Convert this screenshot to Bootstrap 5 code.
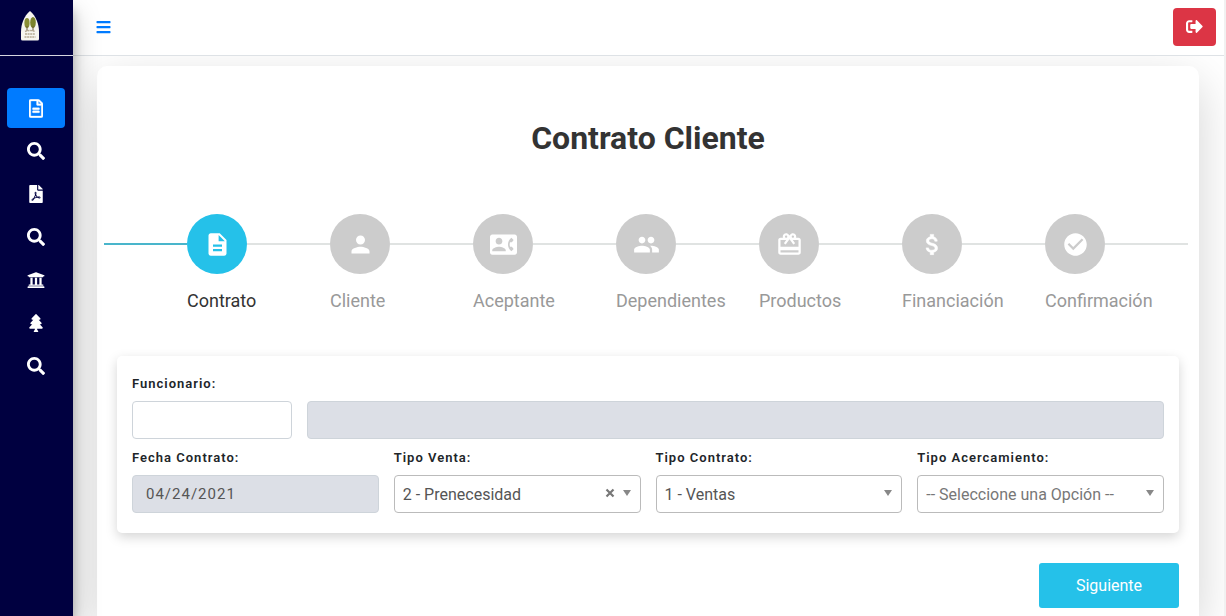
<!DOCTYPE html>
<html lang="es">
<head>
<meta charset="utf-8">
<meta name="viewport" content="width=device-width, initial-scale=1">
<title>Contrato Cliente</title>
<link href="https://cdn.jsdelivr.net/npm/bootstrap@5.3.0/dist/css/bootstrap.min.css" rel="stylesheet">
<style>
  body { font-family: Roboto, "Liberation Sans", sans-serif; background: #fff; color: #212529; }
  svg { fill: currentColor; display: block; }
  .app { border-right: 2px solid #f1f1f1; }
  .sidebar { width: 73px; background: #000040; z-index: 3; box-shadow: 0 14px 28px rgba(0,0,0,.25), 0 10px 10px rgba(0,0,0,.22); }
  .brand-link { height: 56px; border-bottom: 1px solid #d5d5e0; padding: 11px 0 0 20px; }
  .side-nav { padding: 32px 8px 0 7px; gap: 3px; }
  .side-nav .nav-link { height: 40px; border-radius: 4px; color: #fff; padding: 0; }
  .side-nav .nav-link.active { background: #007bff; }
  .topbar { height: 56px; background: #fff; border-bottom: 1px solid #dee2e6; padding: 0 8px 2px 23px; z-index: 2; }
  .btn-menu { color: #007bff; padding: 0; border: 0; }
  .btn-exit { background: #dc3545; color: #fff; width: 43px; height: 38px; border-radius: 4px; }
  .content-area { padding: 10px 25px 0 24px; overflow: hidden; }
  .wizard { border-radius: 10px 10px 0 0; background: #fff; box-shadow: 0 16px 48px rgba(0,0,0,.175); padding: 52px 20px 8px; }
  .wizard h1 { font-size: 32px; line-height: 40px; font-weight: 700; color: #333; margin-bottom: 56px; }
  .steps { margin: 0 -9px 42px -13px; }
  .steps::before { content: ""; flex: 0 0 83px; height: 2px; margin-top: 29px; background: #49b5cb; }
  .step { flex: 1 1 0; min-width: 0; color: #999; font-size: 18px; line-height: 26px; }
  .step-head::after { content: ""; flex: 1; height: 2px; background: #e0e3e2; }
  .step-dot { width: 60px; height: 60px; background: #ccc; color: #fff; }
  .step.current { color: #333; }
  .step.current .step-dot { background: #25c1e9; }
  .step-name { display: block; margin-top: 14px; white-space: nowrap; }
  .form-panel { border-radius: 5px; background: #fff; box-shadow: 0 4px 12px rgba(0,0,0,.17); padding: 19px 15px 20px; margin-bottom: 30px; }
  .form-panel .row { --bs-gutter-x: 15px; }
  .form-panel .row + .row { margin-top: 10px; }
  .form-panel label { display: block; font-size: 13px; line-height: 18px; font-weight: 600; letter-spacing: 1px; margin-bottom: 8px; white-space: nowrap; }
  .field { display: block; width: 100%; height: 38px; border: 1px solid #ced4da; border-radius: 4px; background: #fff; color: #555; font-size: 16px; padding: 0 13px; letter-spacing: 1px; }
  .field:disabled { background: #dcdfe6; font-size: 15px; opacity: 1; }
  select.field { appearance: none; letter-spacing: 0; padding: 1px 40px 0 8px; border-color: #bbb; color: #555;
    background: url("data:image/svg+xml,%3Csvg xmlns='http://www.w3.org/2000/svg' viewBox='0 0 8 6'%3E%3Cpath d='M0 0h8L4 6z' fill='%23888'/%3E%3C/svg%3E") no-repeat right 9px top 14px / 8px 6px #fff; }
  select.field.empty { color: #777; }
  .clear-x { right: 25px; top: 12px; width: 12px; height: 12px; color: #777; border: 0; background: none; padding: 1px; }
  .btn-next { background: #25c1e9; color: #fff; width: 140px; height: 45px; border-radius: 3px; font-size: 16px; }
</style>
</head>
<body>
<svg width="0" height="0" class="position-absolute" aria-hidden="true">
  <symbol id="i-search" viewBox="0 0 512 512"><path d="M505 442.7L405.3 343c-4.5-4.5-10.6-7-17-7H372c27.6-35.3 44-79.7 44-128C416 93.1 322.9 0 208 0S0 93.1 0 208s93.1 208 208 208c48.3 0 92.7-16.4 128-44v16.3c0 6.4 2.5 12.5 7 17l99.7 99.7c9.4 9.4 24.6 9.4 33.9 0l28.3-28.3c9.4-9.4 9.4-24.6.1-34zM208 336c-70.7 0-128-57.2-128-128 0-70.7 57.2-128 128-128 70.7 0 128 57.2 128 128 0 70.7-57.2 128-128 128z"/></symbol>
</svg>
<div class="app d-flex min-vh-100">
  <aside class="sidebar flex-shrink-0 position-relative">
    <a href="#" class="brand-link d-block" aria-label="Inicio">
      <svg width="20" height="30" viewBox="0 0 20 30">
        <path d="M10 0C4 5 1 13 1 21v7q0 1.500 1.500 1.500h15Q19 29.500 19 28v-7C19 13 16 5 10 0z" fill="#f6f5ef"/>
        <ellipse cx="7" cy="12" rx="2.600" ry="5" fill="#8a8f36"/><ellipse cx="13" cy="11.500" rx="2.800" ry="5.500" fill="#7b842c"/>
        <path d="M7 15v5M13 15v5" stroke="#6b5a36" stroke-width="1"/>
        <path d="M5 20.500q5-2 10 0M5 23h10M4.500 26h11" stroke="#b5aa94" stroke-width="1.400" stroke-dasharray="2 .6" fill="none"/>
      </svg>
    </a>
    <nav class="side-nav nav flex-column" aria-label="Principal">
      <a href="#" class="nav-link active d-flex align-items-center justify-content-center" aria-label="Contratos"><svg width="14" height="19" viewBox="0 0 384 512" stroke="currentColor" stroke-width="10"><path d="M288 248v28c0 6.600-5.400 12-12 12H108c-6.600 0-12-5.400-12-12v-28c0-6.600 5.400-12 12-12h168c6.600 0 12 5.400 12 12zm-12 72H108c-6.600 0-12 5.400-12 12v28c0 6.600 5.400 12 12 12h168c6.600 0 12-5.400 12-12v-28c0-6.600-5.400-12-12-12zm108-188.100V464c0 26.500-21.500 48-48 48H48c-26.500 0-48-21.500-48-48V48C0 21.500 21.500 0 48 0h204.100C264.800 0 277 5.100 286 14.100L369.900 98c9 8.900 14.100 21.200 14.100 33.900zm-128-80V128h76.100L256 51.900zM336 464V176H232c-13.300 0-24-10.700-24-24V48H48v416h288z"/></svg></a>
      <a href="#" class="nav-link d-flex align-items-center justify-content-center" aria-label="Buscar contrato"><svg width="18" height="18"><use href="#i-search"/></svg></a>
      <a href="#" class="nav-link d-flex align-items-center justify-content-center" aria-label="Reportes PDF"><svg width="14" height="18" viewBox="0 0 384 512"><path d="M181.900 256.100c-5-16-4.900-46.900-2-46.900 8.400 0 7.600 36.900 2 46.900zm-1.700 47.200c-7.700 20.200-17.300 43.300-28.400 62.700 18.300-7 39-17.200 62.900-21.900-12.700-9.600-24.900-23.400-34.500-40.800zM86.100 428.100c0 .8 13.200-5.400 34.900-40.200-6.700 6.300-29.100 24.500-34.900 40.200zM248 160h136v328c0 13.300-10.700 24-24 24H24c-13.300 0-24-10.700-24-24V24C0 10.700 10.700 0 24 0h200v136c0 13.200 10.800 24 24 24zm-8 171.800c-20-12.200-33.300-29-42.700-53.800 4.500-18.500 11.600-46.600 6.200-64.200-4.700-29.400-42.400-26.500-47.800-6.800-5 18.300-.4 44.100 8.100 77-11.600 27.600-28.700 64.600-40.800 85.800-.1 0-.1.1-.2.1-27.100 13.900-73.600 44.500-54.500 68 5.600 6.900 16 10 21.500 10 17.900 0 35.700-18 61.100-61.800 25.800-8.500 54.100-19.100 79-23.200 21.700 11.800 47.100 19.500 64 19.500 29.200 0 31.200-32 19.700-43.400-13.900-13.600-54.300-9.700-73.600-7.200zM377 105L279 7c-4.500-4.500-10.600-7-17-7h-6v128h128v-6.100c0-6.300-2.500-12.400-7-16.900zm-74.100 255.300c4.100-2.700-2.500-11.900-42.800-9 37.100 15.800 42.800 9 42.800 9z"/></svg></a>
      <a href="#" class="nav-link d-flex align-items-center justify-content-center" aria-label="Buscar cliente"><svg width="18" height="18"><use href="#i-search"/></svg></a>
      <a href="#" class="nav-link d-flex align-items-center justify-content-center" aria-label="Bancos"><svg width="18" height="18" viewBox="0 0 512 512"><path d="M496 128v16a8 8 0 0 1-8 8h-24v12c0 6.627-5.373 12-12 12H60c-6.627 0-12-5.373-12-12v-12H24a8 8 0 0 1-8-8v-16a8 8 0 0 1 4.941-7.392l232-88a7.996 7.996 0 0 1 6.118 0l232 88A8 8 0 0 1 496 128zm-24 304H40c-13.255 0-24 10.745-24 24v16a8 8 0 0 0 8 8h464a8 8 0 0 0 8-8v-16c0-13.255-10.745-24-24-24zM96 192v192H60c-6.627 0-12 5.373-12 12v20h416v-20c0-6.627-5.373-12-12-12h-36V192h-64v192h-64V192h-64v192h-64V192H96z"/></svg></a>
      <a href="#" class="nav-link d-flex align-items-center justify-content-center" aria-label="Parques"><svg width="14" height="18" viewBox="0 0 384 512"><path d="M378.310 378.490L298.420 288h30.630c9.010 0 16.980-5 20.780-13.060 3.800-8.040 2.550-17.260-3.280-24.050L268.420 160h28.890c9.100 0 17.300-5.350 20.860-13.610 3.520-8.130 1.860-17.590-4.240-24.080L203.660 4.830c-6.030-6.450-17.280-6.450-23.320 0L70.060 122.310c-6.100 6.490-7.750 15.950-4.240 24.080C69.380 154.650 77.590 160 86.690 160h28.890l-78.140 90.910c-5.810 6.780-7.060 15.990-3.270 24.040C37.970 283 45.930 288 54.950 288h30.630L5.690 378.490c-6 6.790-7.360 16.090-3.560 24.260 3.750 8.050 12 13.250 21.010 13.250H160v24.450l-30.290 48.400c-5.320 10.640 2.420 23.160 14.310 23.160h95.960c11.890 0 19.630-12.520 14.310-23.160L224 440.450V416h136.860c9.010 0 17.260-5.200 21.010-13.250 3.800-8.170 2.440-17.470-3.560-24.260z"/></svg></a>
      <a href="#" class="nav-link d-flex align-items-center justify-content-center" aria-label="Buscar parque"><svg width="18" height="18"><use href="#i-search"/></svg></a>
    </nav>
  </aside>

  <div class="d-flex flex-column flex-grow-1 overflow-hidden">
    <header class="topbar d-flex align-items-center justify-content-between position-relative">
      <button type="button" class="btn btn-menu" aria-label="Menú"><svg width="15" height="16" viewBox="0 0 448 512"><path d="M16 132h416c8.837 0 16-7.163 16-16V76c0-8.837-7.163-16-16-16H16C7.163 60 0 67.163 0 76v40c0 8.837 7.163 16 16 16zm0 160h416c8.837 0 16-7.163 16-16v-40c0-8.837-7.163-16-16-16H16c-8.837 0-16 7.163-16 16v40c0 8.837 7.163 16 16 16zm0 160h416c8.837 0 16-7.163 16-16v-40c0-8.837-7.163-16-16-16H16c-8.837 0-16 7.163-16 16v40c0 8.837 7.163 16 16 16z"/></svg></button>
      <button type="button" class="btn btn-exit d-flex align-items-center justify-content-center p-0" aria-label="Salir"><svg width="17" height="17" viewBox="0 0 512 512"><path d="M497 273L329 441c-15 15-41 4.500-41-17v-96H152c-13.300 0-24-10.700-24-24v-96c0-13.300 10.700-24 24-24h136V88c0-21.400 25.900-32 41-17l168 168c9.300 9.400 9.300 24.600 0 34zM192 436v-40c0-6.600-5.400-12-12-12H96c-17.700 0-32-14.300-32-32V160c0-17.700 14.300-32 32-32h84c6.600 0 12-5.400 12-12V76c0-6.600-5.400-12-12-12H96c-53 0-96 43-96 96v192c0 53 43 96 96 96h84c6.600 0 12-5.400 12-12z"/></svg></button>
    </header>

    <main class="content-area d-flex flex-column flex-grow-1">
      <form class="wizard flex-grow-1">
        <h1 class="text-center">Contrato Cliente</h1>
        <ol class="steps d-flex list-unstyled">
          <li class="step current" aria-current="step">
            <div class="step-head d-flex align-items-center"><span class="step-dot rounded-circle d-flex align-items-center justify-content-center"><svg width="27" height="27" viewBox="0 0 24 24"><path d="M14 2H6c-1.100 0-2 .9-2 2v16c0 1.100.9 2 2 2h12c1.100 0 2-.9 2-2V8l-6-6zm2 16H8v-2h8v2zm0-4H8v-2h8v2zm-3-5V3.500L18.500 9H13z"/></svg></span></div>
            <span class="step-name">Contrato</span>
          </li>
          <li class="step">
            <div class="step-head d-flex align-items-center"><span class="step-dot rounded-circle d-flex align-items-center justify-content-center"><svg width="27" height="27" viewBox="0 0 24 24"><path d="M12 12c2.210 0 4-1.790 4-4s-1.790-4-4-4-4 1.790-4 4 1.790 4 4 4zm0 2c-2.670 0-8 1.340-8 4v2h16v-2c0-2.660-5.330-4-8-4z"/></svg></span></div>
            <span class="step-name">Cliente</span>
          </li>
          <li class="step">
            <div class="step-head d-flex align-items-center"><span class="step-dot rounded-circle d-flex align-items-center justify-content-center"><svg width="27" height="27" viewBox="0 0 24 24"><path d="M22 3H2C.9 3 0 3.900 0 5v14c0 1.100.9 2 2 2h20c1.100 0 1.990-.9 1.990-2L24 5c0-1.100-.9-2-2-2zM8 6c1.660 0 3 1.340 3 3s-1.340 3-3 3-3-1.340-3-3 1.340-3 3-3zm6 12H2v-1c0-2 4-3.100 6-3.100s6 1.100 6 3.100v1zm3.850-4h1.640L21 16l-1.990 1.990c-1.310-.98-2.280-2.380-2.730-3.990-.18-.64-.28-1.310-.28-2s.1-1.360.28-2c.45-1.620 1.420-3.010 2.730-3.990L21 8l-1.510 2h-1.640c-.22.630-.35 1.300-.35 2s.13 1.370.35 2z"/></svg></span></div>
            <span class="step-name">Aceptante</span>
          </li>
          <li class="step">
            <div class="step-head d-flex align-items-center"><span class="step-dot rounded-circle d-flex align-items-center justify-content-center"><svg width="27" height="27" viewBox="0 0 24 24"><path d="M16 11c1.660 0 2.990-1.340 2.990-3S17.660 5 16 5c-1.660 0-3 1.340-3 3s1.340 3 3 3zm-8 0c1.660 0 2.990-1.340 2.990-3S9.660 5 8 5C6.340 5 5 6.340 5 8s1.340 3 3 3zm0 2c-2.330 0-7 1.170-7 3.500V19h14v-2.500c0-2.330-4.670-3.500-7-3.500zm8 0c-.29 0-.62.020-.97.050 1.160.84 1.970 1.970 1.970 3.450V19h6v-2.500c0-2.330-4.670-3.500-7-3.500z"/></svg></span></div>
            <span class="step-name">Dependientes</span>
          </li>
          <li class="step">
            <div class="step-head d-flex align-items-center"><span class="step-dot rounded-circle d-flex align-items-center justify-content-center"><svg width="27" height="27" viewBox="0 0 24 24"><path d="M20 6h-2.180c.11-.31.180-.65.180-1 0-1.660-1.340-3-3-3-1.050 0-1.960.54-2.500 1.350l-.5.670-.5-.68C10.960 2.540 10.050 2 9 2 7.340 2 6 3.340 6 5c0 .35.070.69.180 1H4c-1.110 0-1.990.89-1.990 2L2 19c0 1.110.89 2 2 2h16c1.110 0 2-.89 2-2V8c0-1.110-.89-2-2-2zm-5-2c.55 0 1 .45 1 1s-.45 1-1 1-1-.45-1-1 .45-1 1-1zM9 4c.55 0 1 .45 1 1s-.45 1-1 1-1-.45-1-1 .45-1 1-1zm11 15H4v-2h16v2zm0-5H4V8h5.080L7 10.830 8.620 12 11 8.760l1-1.360 1 1.360L15.380 12 17 10.830 14.920 8H20v6z"/></svg></span></div>
            <span class="step-name">Productos</span>
          </li>
          <li class="step">
            <div class="step-head d-flex align-items-center"><span class="step-dot rounded-circle d-flex align-items-center justify-content-center"><svg width="27" height="27" viewBox="0 0 24 24" stroke="currentColor" stroke-width=".5"><path d="M11.800 10.900c-2.270-.59-3-1.200-3-2.150 0-1.090 1.010-1.850 2.700-1.850 1.780 0 2.440.85 2.500 2.100h2.210c-.07-1.720-1.120-3.300-3.210-3.810V3h-3v2.160c-1.940.42-3.500 1.680-3.500 3.610 0 2.310 1.910 3.460 4.700 4.130 2.500.6 3 1.480 3 2.410 0 .69-.49 1.790-2.700 1.790-2.060 0-2.870-.92-2.980-2.100h-2.200c.12 2.190 1.760 3.420 3.680 3.830V21h3v-2.150c1.950-.37 3.500-1.500 3.500-3.550 0-2.840-2.430-3.810-4.700-4.400z"/></svg></span></div>
            <span class="step-name">Financiación</span>
          </li>
          <li class="step">
            <div class="step-head d-flex align-items-center"><span class="step-dot rounded-circle d-flex align-items-center justify-content-center"><svg width="27" height="27" viewBox="0 0 24 24"><path d="M12 2C6.480 2 2 6.480 2 12s4.480 10 10 10 10-4.480 10-10S17.520 2 12 2zm-2 15l-5-5 1.410-1.410L10 14.170l7.590-7.590L19 8l-9 9z"/></svg></span></div>
            <span class="step-name">Confirmación</span>
          </li>
        </ol>

        <section class="form-panel">
          <div class="row align-items-end">
            <div class="col-2">
              <label for="funcionario">Funcionario:</label>
              <input class="field" type="text" id="funcionario">
            </div>
            <div class="col-10">
              <input class="field" type="text" aria-label="Nombre del funcionario" disabled>
            </div>
          </div>
          <div class="row">
            <div class="col-3">
              <label for="fecha">Fecha Contrato:</label>
              <input class="field" type="text" id="fecha" value="04/24/2021" disabled>
            </div>
            <div class="col-3">
              <label for="venta">Tipo Venta:</label>
              <div class="position-relative">
                <select class="field" id="venta"><option>2 - Prenecesidad</option></select>
                <button type="button" class="clear-x position-absolute" aria-label="Quitar"><svg width="10" height="10" viewBox="0 0 10 10"><path d="M1.500 1.500l7 7M8.500 1.500l-7 7" stroke="currentColor" stroke-width="2.200"/></svg></button>
              </div>
            </div>
            <div class="col-3">
              <label for="contrato">Tipo Contrato:</label>
              <select class="field" id="contrato"><option>1 - Ventas</option></select>
            </div>
            <div class="col-3">
              <label for="acercamiento">Tipo Acercamiento:</label>
              <select class="field empty" id="acercamiento"><option>-- Seleccione una Opción --</option></select>
            </div>
          </div>
        </section>

        <div class="d-flex justify-content-end">
          <button type="button" class="btn btn-next p-0">Siguiente</button>
        </div>
      </form>
    </main>
  </div>
</div>
<script src="https://cdn.jsdelivr.net/npm/bootstrap@5.3.0/dist/js/bootstrap.bundle.min.js"></script>
</body>
</html>
